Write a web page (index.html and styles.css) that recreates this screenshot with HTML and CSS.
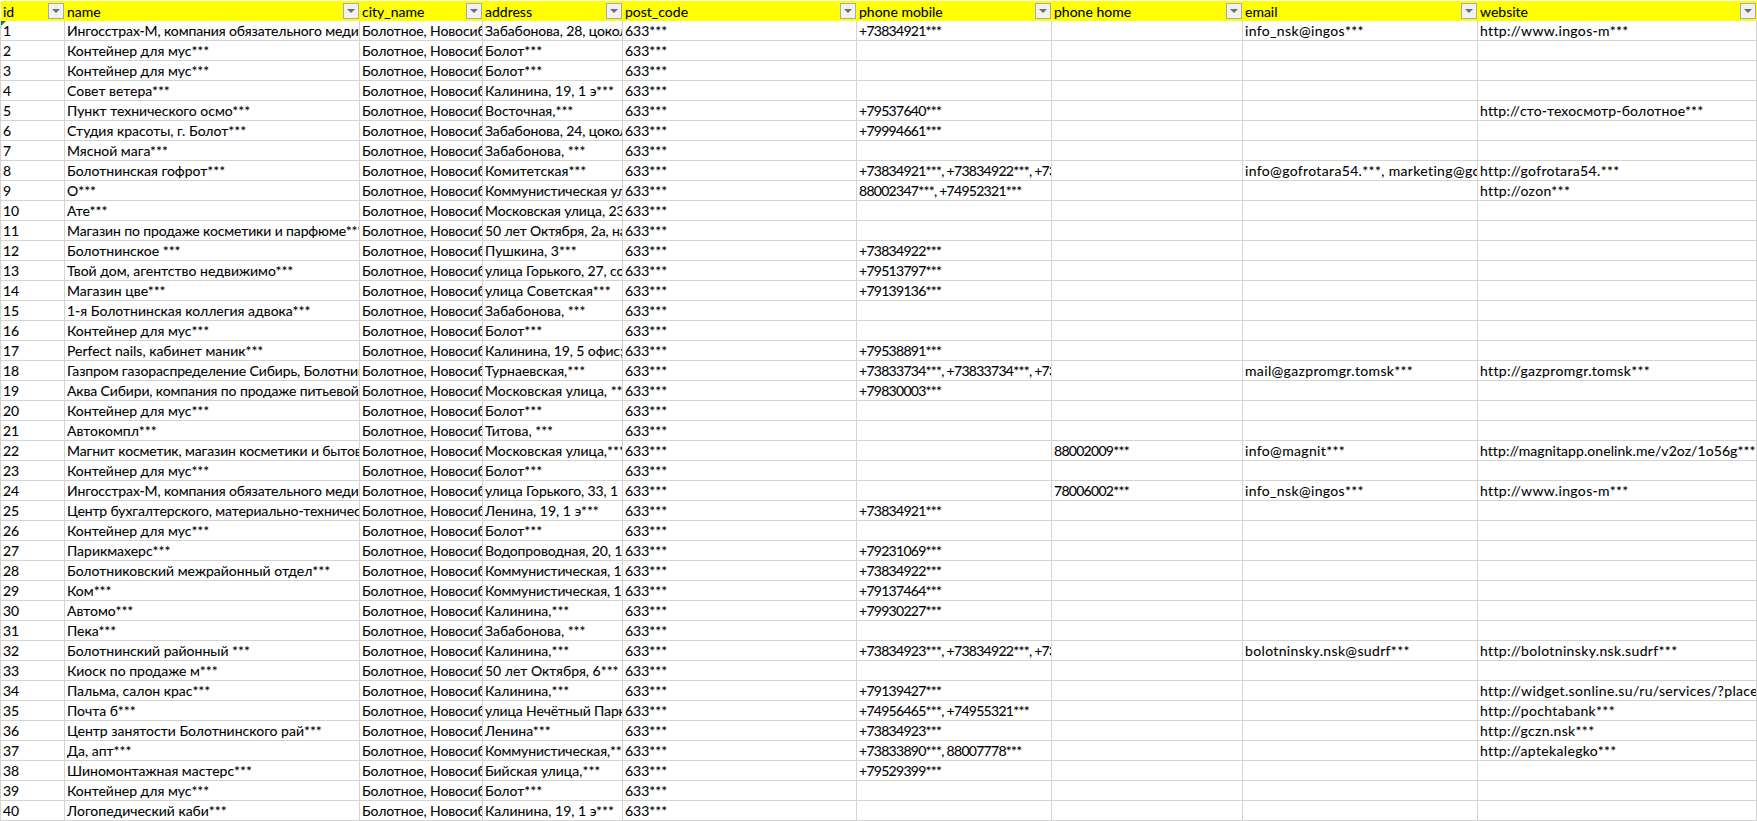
FILE: index.html
```html
<!DOCTYPE html>
<html lang="ru">
<head>
<meta charset="utf-8">
<title>Таблица организаций</title>
<link rel="stylesheet" href="styles.css">
</head>
<body>
<table class="sheet">
<colgroup>
<col class="c-id"><col class="c-name"><col class="c-city"><col class="c-addr"><col class="c-post"><col class="c-mob"><col class="c-home"><col class="c-mail"><col class="c-web">
</colgroup>
<thead>
<tr>
<th><div class="head"><span>id</span><i class="filter"></i></div></th>
<th><div class="head"><span>name</span><i class="filter"></i></div></th>
<th><div class="head"><span>city_name</span><i class="filter"></i></div></th>
<th><div class="head"><span>address</span><i class="filter"></i></div></th>
<th><div class="head"><span>post_code</span><i class="filter"></i></div></th>
<th><div class="head"><span>phone mobile</span><i class="filter"></i></div></th>
<th><div class="head"><span>phone home</span><i class="filter"></i></div></th>
<th><div class="head"><span>email</span><i class="filter"></i></div></th>
<th><div class="head"><span>website</span><i class="filter"></i></div></th>
</tr>
</thead>
<tbody>
<tr><td class="flagged">1</td><td class="long">Ингосстрах-М, компания обязательного медицинского страхования***</td><td>Болотное, Новосибирская область</td><td class="long">Забабонова, 28, цоколь***</td><td>633***</td><td>+73834921***</td><td></td><td>info_nsk@ingos***</td><td>http://www.ingos-m***</td></tr>
<tr><td>2</td><td>Контейнер для мус***</td><td>Болотное, Новосибирская область</td><td>Болот***</td><td>633***</td><td></td><td></td><td></td><td></td></tr>
<tr><td>3</td><td>Контейнер для мус***</td><td>Болотное, Новосибирская область</td><td>Болот***</td><td>633***</td><td></td><td></td><td></td><td></td></tr>
<tr><td>4</td><td>Совет ветера***</td><td>Болотное, Новосибирская область</td><td>Калинина, 19, 1 э***</td><td>633***</td><td></td><td></td><td></td><td></td></tr>
<tr><td>5</td><td>Пункт технического осмо***</td><td>Болотное, Новосибирская область</td><td>Восточная,***</td><td>633***</td><td>+79537640***</td><td></td><td></td><td class="cyr">http://сто-техосмотр-болотное***</td></tr>
<tr><td>6</td><td>Студия красоты, г. Болот***</td><td>Болотное, Новосибирская область</td><td class="long">Забабонова, 24, цоколь***</td><td>633***</td><td>+79994661***</td><td></td><td></td><td></td></tr>
<tr><td>7</td><td>Мясной мага***</td><td>Болотное, Новосибирская область</td><td>Забабонова, ***</td><td>633***</td><td></td><td></td><td></td><td></td></tr>
<tr><td>8</td><td>Болотнинская гофрот***</td><td>Болотное, Новосибирская область</td><td>Комитетская***</td><td>633***</td><td>+73834921***, +73834922***, +73834923***</td><td></td><td>info@gofrotara54.***, marketing@gofrotara54***</td><td>http://gofrotara54.***</td></tr>
<tr><td>9</td><td>О***</td><td>Болотное, Новосибирская область</td><td class="long">Коммунистическая улица***</td><td>633***</td><td>88002347***, +74952321***</td><td></td><td></td><td>http://ozon***</td></tr>
<tr><td>10</td><td>Ате***</td><td>Болотное, Новосибирская область</td><td class="long">Московская улица, 23***</td><td>633***</td><td></td><td></td><td></td><td></td></tr>
<tr><td>11</td><td class="long">Магазин по продаже косметики и парфюме***</td><td>Болотное, Новосибирская область</td><td class="long">50 лет Октября, 2а, на***</td><td>633***</td><td></td><td></td><td></td><td></td></tr>
<tr><td>12</td><td>Болотнинское ***</td><td>Болотное, Новосибирская область</td><td>Пушкина, 3***</td><td>633***</td><td>+73834922***</td><td></td><td></td><td></td></tr>
<tr><td>13</td><td>Твой дом, агентство недвижимо***</td><td>Болотное, Новосибирская область</td><td class="long">улица Горького, 27, со***</td><td>633***</td><td>+79513797***</td><td></td><td></td><td></td></tr>
<tr><td>14</td><td>Магазин цве***</td><td>Болотное, Новосибирская область</td><td>улица Советская***</td><td>633***</td><td>+79139136***</td><td></td><td></td><td></td></tr>
<tr><td>15</td><td>1-я Болотнинская коллегия адвока***</td><td>Болотное, Новосибирская область</td><td>Забабонова, ***</td><td>633***</td><td></td><td></td><td></td><td></td></tr>
<tr><td>16</td><td>Контейнер для мус***</td><td>Болотное, Новосибирская область</td><td>Болот***</td><td>633***</td><td></td><td></td><td></td><td></td></tr>
<tr><td>17</td><td>Perfect nails, кабинет маник***</td><td>Болотное, Новосибирская область</td><td class="long">Калинина, 19, 5 офис; ***</td><td>633***</td><td>+79538891***</td><td></td><td></td><td></td></tr>
<tr><td>18</td><td class="long">Газпром газораспределение Сибирь, Болотнинский***</td><td>Болотное, Новосибирская область</td><td>Турнаевская,***</td><td>633***</td><td>+73833734***, +73833734***, +73833734***</td><td></td><td>mail@gazpromgr.tomsk***</td><td>http://gazpromgr.tomsk***</td></tr>
<tr><td>19</td><td class="long">Аква Сибири, компания по продаже питьевой воды***</td><td>Болотное, Новосибирская область</td><td>Московская улица, ***</td><td>633***</td><td>+79830003***</td><td></td><td></td><td></td></tr>
<tr><td>20</td><td>Контейнер для мус***</td><td>Болотное, Новосибирская область</td><td>Болот***</td><td>633***</td><td></td><td></td><td></td><td></td></tr>
<tr><td>21</td><td>Автокомпл***</td><td>Болотное, Новосибирская область</td><td>Титова, ***</td><td>633***</td><td></td><td></td><td></td><td></td></tr>
<tr><td>22</td><td class="long">Магнит косметик, магазин косметики и бытовой химии***</td><td>Болотное, Новосибирская область</td><td>Московская улица,***</td><td>633***</td><td></td><td>88002009***</td><td>info@magnit***</td><td class="tight">http://magnitapp.onelink.me/v2oz/1o56g***</td></tr>
<tr><td>23</td><td>Контейнер для мус***</td><td>Болотное, Новосибирская область</td><td>Болот***</td><td>633***</td><td></td><td></td><td></td><td></td></tr>
<tr><td>24</td><td class="long">Ингосстрах-М, компания обязательного медицинского страхования***</td><td>Болотное, Новосибирская область</td><td class="long">улица Горького, 33, 1 этаж***</td><td>633***</td><td></td><td>78006002***</td><td>info_nsk@ingos***</td><td>http://www.ingos-m***</td></tr>
<tr><td>25</td><td class="long">Центр бухгалтерского, материально-технического обеспечения***</td><td>Болотное, Новосибирская область</td><td>Ленина, 19, 1 э***</td><td>633***</td><td>+73834921***</td><td></td><td></td><td></td></tr>
<tr><td>26</td><td>Контейнер для мус***</td><td>Болотное, Новосибирская область</td><td>Болот***</td><td>633***</td><td></td><td></td><td></td><td></td></tr>
<tr><td>27</td><td>Парикмахерс***</td><td>Болотное, Новосибирская область</td><td class="long">Водопроводная, 20, 1 этаж***</td><td>633***</td><td>+79231069***</td><td></td><td></td><td></td></tr>
<tr><td>28</td><td>Болотниковский межрайонный отдел***</td><td>Болотное, Новосибирская область</td><td class="long">Коммунистическая, 16***</td><td>633***</td><td>+73834922***</td><td></td><td></td><td></td></tr>
<tr><td>29</td><td>Ком***</td><td>Болотное, Новосибирская область</td><td class="long">Коммунистическая, 16***</td><td>633***</td><td>+79137464***</td><td></td><td></td><td></td></tr>
<tr><td>30</td><td>Автомо***</td><td>Болотное, Новосибирская область</td><td>Калинина,***</td><td>633***</td><td>+79930227***</td><td></td><td></td><td></td></tr>
<tr><td>31</td><td>Пека***</td><td>Болотное, Новосибирская область</td><td>Забабонова, ***</td><td>633***</td><td></td><td></td><td></td><td></td></tr>
<tr><td>32</td><td>Болотнинский районный ***</td><td>Болотное, Новосибирская область</td><td>Калинина,***</td><td>633***</td><td>+73834923***, +73834922***, +73834921***</td><td></td><td>bolotninsky.nsk@sudrf***</td><td>http://bolotninsky.nsk.sudrf***</td></tr>
<tr><td>33</td><td>Киоск по продаже м***</td><td>Болотное, Новосибирская область</td><td>50 лет Октября, 6***</td><td>633***</td><td></td><td></td><td></td><td></td></tr>
<tr><td>34</td><td>Пальма, салон крас***</td><td>Болотное, Новосибирская область</td><td>Калинина,***</td><td>633***</td><td>+79139427***</td><td></td><td></td><td>http://widget.sonline.su/ru/services/?placeid=***</td></tr>
<tr><td>35</td><td>Почта б***</td><td>Болотное, Новосибирская область</td><td class="long">улица Нечётный Парк***</td><td>633***</td><td>+74956465***, +74955321***</td><td></td><td></td><td>http://pochtabank***</td></tr>
<tr><td>36</td><td>Центр занятости Болотнинского рай***</td><td>Болотное, Новосибирская область</td><td>Ленина***</td><td>633***</td><td>+73834923***</td><td></td><td></td><td>http://gczn.nsk***</td></tr>
<tr><td>37</td><td>Да, апт***</td><td>Болотное, Новосибирская область</td><td class="long">Коммунистическая,***</td><td>633***</td><td>+73833890***, 88007778***</td><td></td><td></td><td>http://aptekalegko***</td></tr>
<tr><td>38</td><td>Шиномонтажная мастерс***</td><td>Болотное, Новосибирская область</td><td>Бийская улица,***</td><td>633***</td><td>+79529399***</td><td></td><td></td><td></td></tr>
<tr><td>39</td><td>Контейнер для мус***</td><td>Болотное, Новосибирская область</td><td>Болот***</td><td>633***</td><td></td><td></td><td></td><td></td></tr>
<tr><td>40</td><td>Логопедический каби***</td><td>Болотное, Новосибирская область</td><td>Калинина, 19, 1 э***</td><td>633***</td><td></td><td></td><td></td><td></td></tr>
</tbody>
</table>
</body>
</html>
```
FILE: styles.css
```css
html, body {
  margin: 0;
  padding: 0;
  background: #fff;
  overflow: hidden;
}

.sheet {
  table-layout: fixed;
  width: 1757px;
  margin-top: 1px;
  border-collapse: separate;
  border-spacing: 0;
  font-family: Lato, "Noto Sans", sans-serif;
  font-size: 14px;
  color: #000;
  -webkit-text-stroke: 0.08px #000;
}

.c-id { width: 65px; }
.c-name { width: 295px; }
.c-city { width: 123px; }
.c-addr { width: 140px; }
.c-post { width: 234px; }
.c-mob { width: 195px; }
.c-home { width: 191px; }
.c-mail { width: 235px; }
.c-web { width: 279px; }

.sheet th {
  box-sizing: border-box;
  height: 20px;
  padding: 0;
  background: #ff0;
  font-weight: 400;
  text-align: left;
}

.sheet th:first-child {
  border-left: 1px solid #fff;
}

.head {
  display: flex;
  align-items: center;
  justify-content: space-between;
  height: 20px;
  padding-left: 2px;
}

.filter {
  display: flex;
  align-items: center;
  justify-content: center;
  box-sizing: border-box;
  width: 16px;
  height: 16px;
  margin-right: 1px;
  border: 1px solid #a7abb0;
  background: #f1f1f1;
}

.filter::after {
  content: "";
  width: 0;
  height: 0;
  border-left: 4px solid transparent;
  border-right: 4px solid transparent;
  border-top: 4px solid #6d6f73;
}

.sheet td {
  box-sizing: border-box;
  height: 20px;
  padding: 1px 0 0 2px;
  border-right: 1px solid #d4d4d4;
  border-bottom: 1px solid #d4d4d4;
  overflow: hidden;
  white-space: nowrap;
  line-height: 18px;
}

.sheet td:first-child {
  border-left: 1px solid #d4d4d4;
}

.sheet td:nth-child(3),
.sheet td.long {
  letter-spacing: -0.12px;
}

.sheet td:nth-child(6),
.sheet td:nth-child(7) {
  letter-spacing: -0.72px;
}

.sheet td:nth-child(8),
.sheet td:nth-child(9) {
  letter-spacing: 0.35px;
}

.sheet td.cyr {
  letter-spacing: 0.18px;
}

.sheet td.tight {
  letter-spacing: 0.07px;
}

.sheet td.flagged {
  position: relative;
}

.flagged::before {
  content: "";
  position: absolute;
  top: 0;
  left: 0;
  width: 0;
  height: 0;
  border-top: 5px solid #1e7b34;
  border-right: 5px solid transparent;
}
```
